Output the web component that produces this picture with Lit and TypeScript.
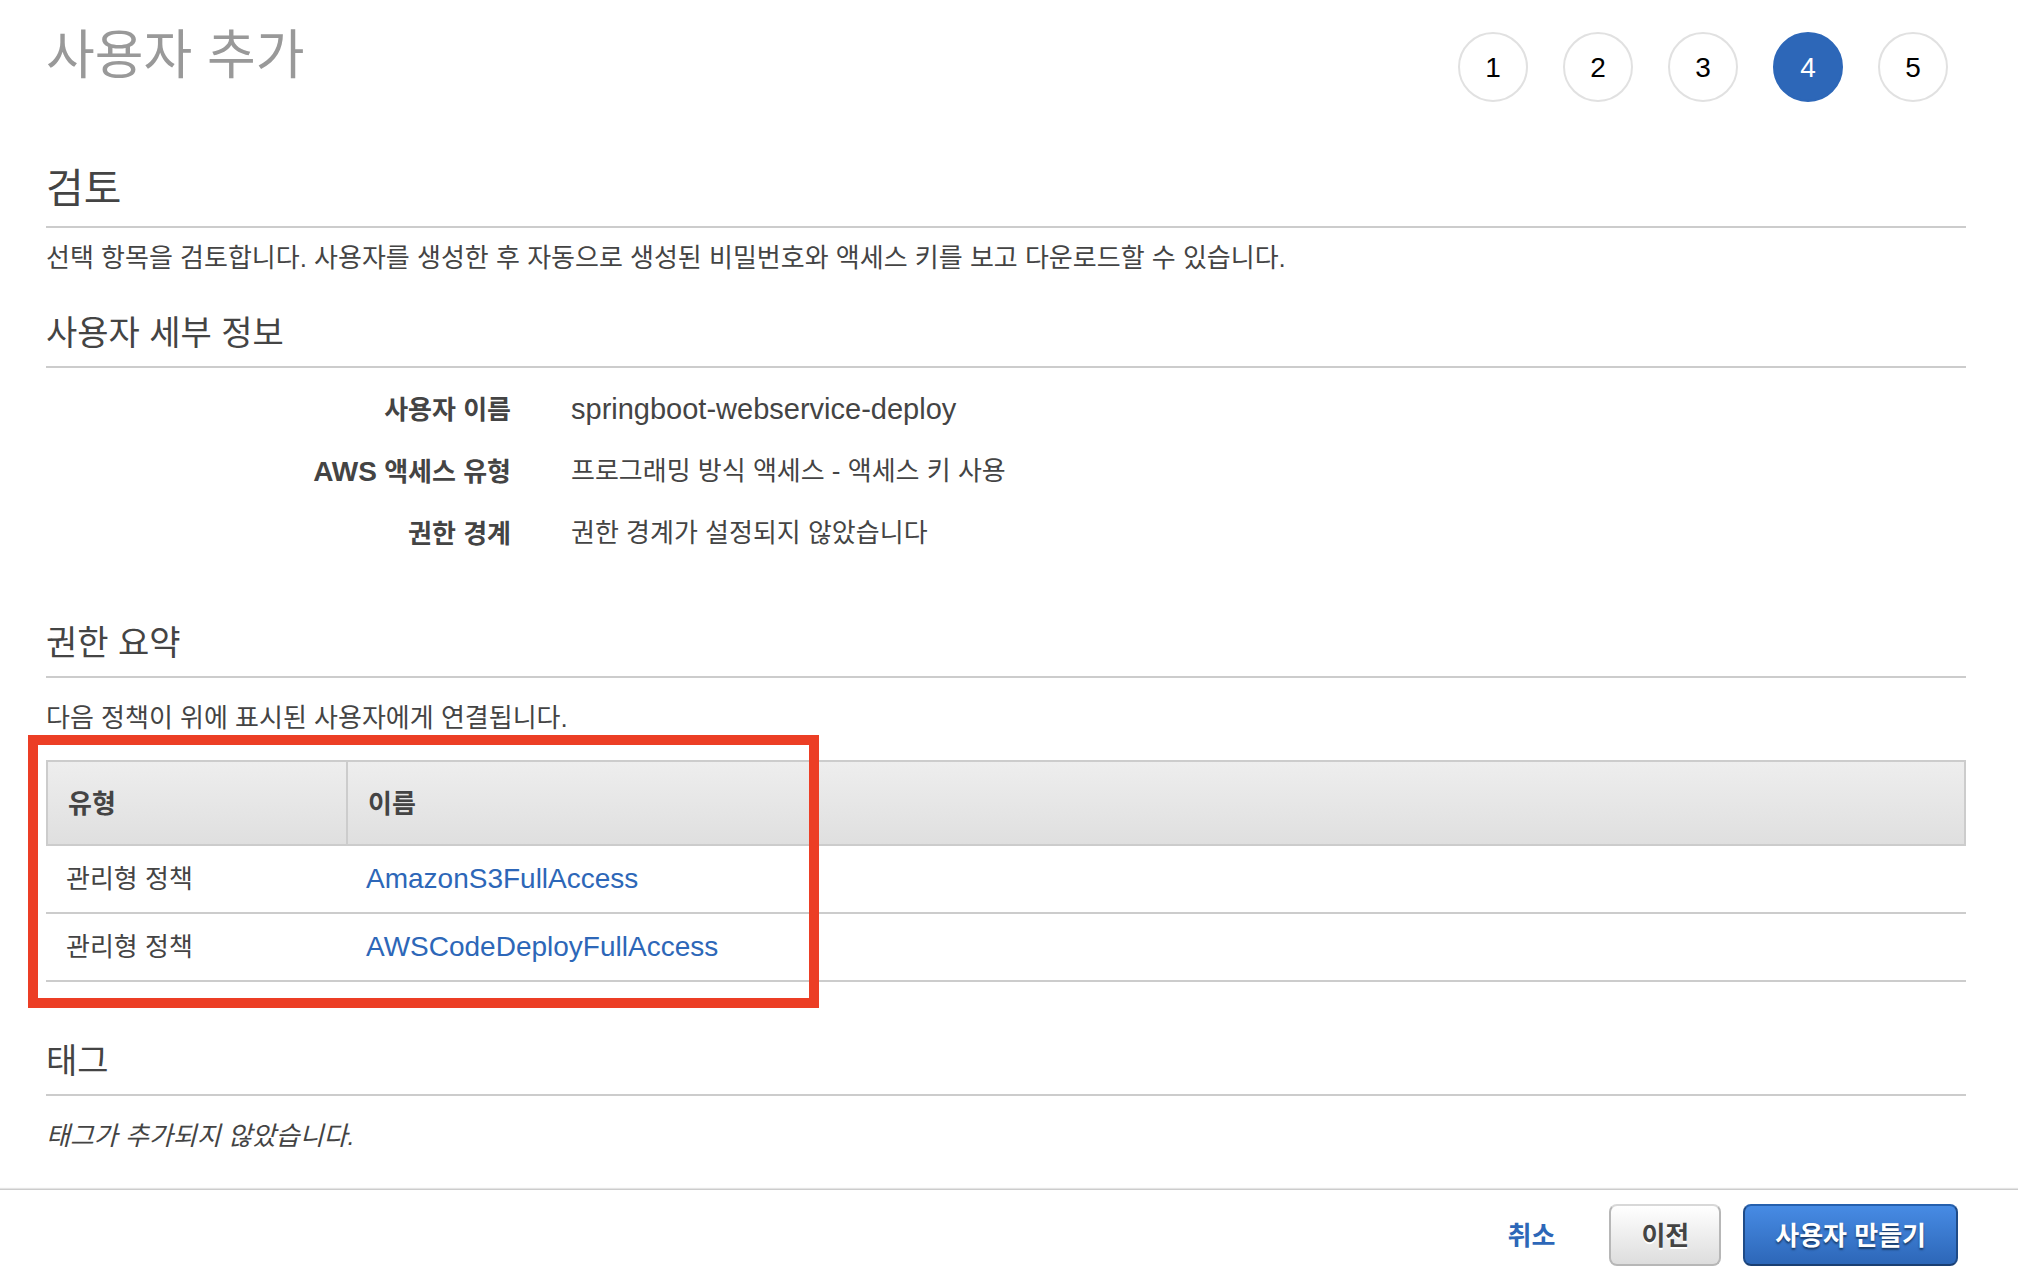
import { LitElement, html, css } from "lit";
import { customElement, property } from "lit/decorators.js";
import { classMap } from "lit/directives/class-map.js";

interface Detail {
  prefix?: string;
  label: string;
  value: string;
  latin?: boolean;
}

interface Policy {
  type: string;
  name: string;
}

const DETAILS: Detail[] = [
  { label: "사용자 이름", value: "springboot-webservice-deploy", latin: true },
  { prefix: "AWS", label: " 액세스 유형", value: "프로그래밍 방식 액세스 - 액세스 키 사용" },
  { label: "권한 경계", value: "권한 경계가 설정되지 않았습니다" },
];

const POLICIES: Policy[] = [
  { type: "관리형 정책", name: "AmazonS3FullAccess" },
  { type: "관리형 정책", name: "AWSCodeDeployFullAccess" },
];

@customElement("wizard-steps")
export class WizardSteps extends LitElement {
  @property({ type: Number }) total = 5;
  @property({ type: Number }) current = 1;

  static styles = css`
    :host {
      display: block;
    }
    .steps {
      display: flex;
      gap: 35px;
      margin: 0;
      padding: 0;
      list-style: none;
    }
    .step {
      box-sizing: border-box;
      display: flex;
      align-items: center;
      justify-content: center;
      width: 70px;
      height: 70px;
      padding-top: 2px;
      border: 2px solid #e1e1e1;
      border-radius: 50%;
      color: #000;
      font-size: 28px;
      line-height: 36px;
    }
    .current {
      border-color: #2d67b8;
      background: #2d67b8;
      color: #fff;
    }
  `;

  render() {
    const steps = Array.from({ length: this.total }, (_, i) => i + 1);
    return html`
      <ol class="steps">
        ${steps.map(
          (n) => html`<li
            class=${classMap({ step: true, current: n === this.current })}
            aria-current=${n === this.current ? "step" : "false"}
          >${n}</li>`
        )}
      </ol>
    `;
  }
}

@customElement("app-root")
export class AppRoot extends LitElement {
  static styles = css`
    :host {
      display: block;
      background: #fff;
      color: #444;
      font-family: "Liberation Sans", "Noto Sans CJK KR", sans-serif;
      font-size: 26px;
      line-height: 36px;
    }
    .page {
      padding: 32px 52px 34px 46px;
    }
    .header {
      display: flex;
      align-items: flex-start;
      justify-content: space-between;
      padding-right: 18px;
      margin-bottom: 62px;
    }
    h1,
    h2,
    h3,
    p,
    dl,
    dd {
      margin: 0;
      font-weight: 400;
    }
    h1 {
      color: #999;
      font-size: 53px;
      line-height: 48px;
    }
    h2 {
      padding-bottom: 12px;
      border-bottom: 2px solid #ccc;
      font-size: 41px;
      line-height: 50px;
    }
    h3 {
      padding-bottom: 11px;
      border-bottom: 2px solid #ccc;
      font-size: 34px;
      line-height: 44px;
    }
    .intro {
      margin: 12px 0 35px;
    }
    .note {
      margin-top: 22px;
    }
    .empty {
      font-style: italic;
    }
    .details {
      display: grid;
      grid-template-columns: minmax(0, 465px) 1fr;
      grid-auto-rows: minmax(36px, auto);
      gap: 26px 60px;
      margin: 24px 0 69px;
    }
    dt {
      font-weight: 700;
      text-align: right;
    }
    dd {
      line-height: 34px;
    }
    dd.latin {
      font-size: 29px;
    }
    .latin {
      font-size: 28px;
      line-height: 34px;
    }
    .policies {
      position: relative;
      margin: 24px 0 57px;
    }
    table {
      width: 100%;
      border-collapse: separate;
      border-spacing: 0;
      table-layout: fixed;
    }
    th {
      box-sizing: border-box;
      padding: 24px 20px 22px;
      border: 2px solid #ccc;
      border-right-width: 0;
      text-align: left;
      font-weight: 700;
    }
    .type-column {
      width: 300px;
    }
    th:last-child {
      border-right-width: 2px;
    }
    thead {
      background: linear-gradient(#eee, #dfdfdf);
    }
    td {
      padding: 15px 20px;
      border-bottom: 2px solid #ccc;
    }
    a {
      color: #2d67b8;
      text-decoration: none;
    }
    .marker {
      position: absolute;
      box-sizing: border-box;
      top: -25px;
      bottom: -26px;
      left: -18px;
      width: 791px;
      border: 10px solid #ec3e25;
      pointer-events: none;
    }
    .footer {
      display: flex;
      align-items: center;
      justify-content: flex-end;
      gap: 22px;
      padding: 14px 60px 4px;
      border-top: 1px solid #ccc;
      box-shadow: 0 -1px 1px #e4e4e4;
      margin-top: 1px;
    }
    button {
      box-sizing: border-box;
      height: 62px;
      padding: 2px 30px 0;
      border: 2px solid #b7b7b7;
      border-radius: 8px;
      font: inherit;
      font-weight: 700;
      cursor: pointer;
    }
    .link {
      border-color: transparent;
      background: none;
      color: #2d67b8;
    }
    .secondary {
      border-top-color: #d8d8d8;
      background: linear-gradient(#fff, #ddd);
      color: #444;
      text-shadow: 0 2px 0 #fff;
    }
    .primary {
      border-color: #2560ae #1f4b87 #1a3f73;
      background: linear-gradient(#478be4, #2d67b8);
      color: #fff;
      text-shadow: 0 2px 2px #1a3a66;
    }
  `;

  render() {
    return html`
      <main class="page">
        <header class="header">
          <h1>사용자 추가</h1>
          <wizard-steps total="5" current="4"></wizard-steps>
        </header>

        <section>
          <h2>검토</h2>
          <p class="intro">선택 항목을 검토합니다. 사용자를 생성한 후 자동으로 생성된 비밀번호와 액세스 키를 보고 다운로드할 수 있습니다.</p>
        </section>

        <section>
          <h3>사용자 세부 정보</h3>
          <dl class="details">
            ${DETAILS.map(
              (d) => html`
                <dt>${d.prefix ? html`<span class="latin">${d.prefix}</span>` : ""}${d.label}</dt>
                <dd class=${classMap({ latin: !!d.latin })}>${d.value}</dd>
              `
            )}
          </dl>
        </section>

        <section>
          <h3>권한 요약</h3>
          <p class="note">다음 정책이 위에 표시된 사용자에게 연결됩니다.</p>
          <div class="policies">
            <table>
              <thead>
                <tr>
                  <th class="type-column" scope="col">유형</th>
                  <th scope="col">이름</th>
                </tr>
              </thead>
              <tbody>
                ${POLICIES.map(
                  (p) => html`<tr>
                    <td>${p.type}</td>
                    <td><a class="latin" href="#${p.name}">${p.name}</a></td>
                  </tr>`
                )}
              </tbody>
            </table>
            <div class="marker"></div>
          </div>
        </section>

        <section>
          <h3>태그</h3>
          <p class="note empty">태그가 추가되지 않았습니다.</p>
        </section>
      </main>

      <footer class="footer">
        <button class="link" type="button">취소</button>
        <button class="secondary" type="button">이전</button>
        <button class="primary" type="button">사용자 만들기</button>
      </footer>
    `;
  }
}
